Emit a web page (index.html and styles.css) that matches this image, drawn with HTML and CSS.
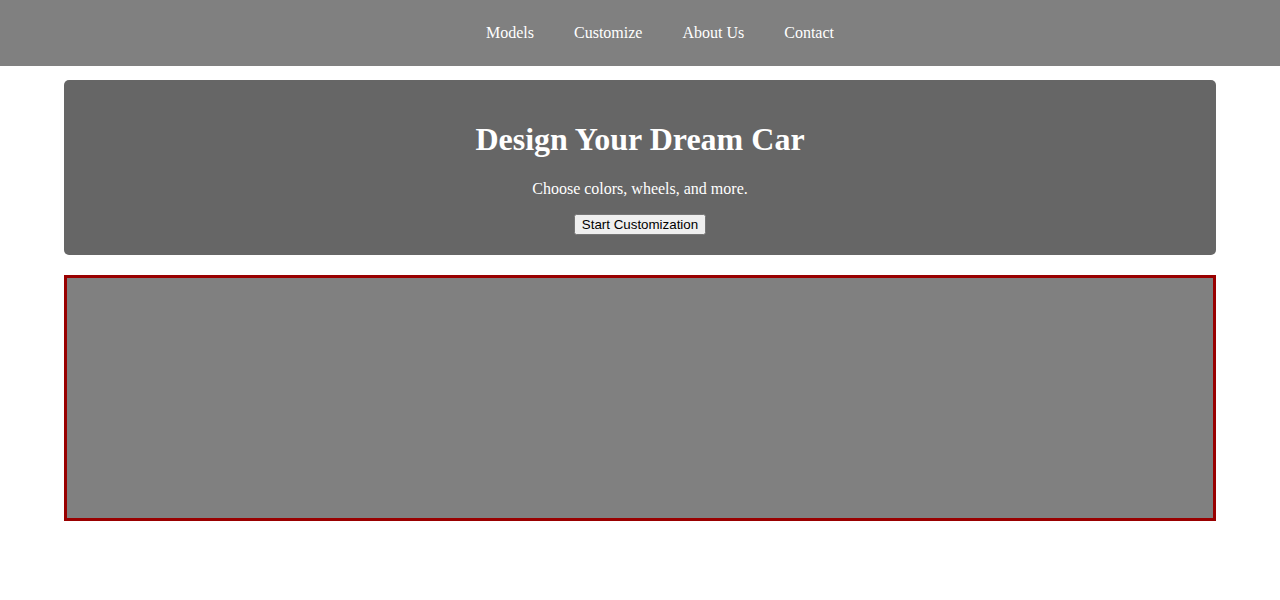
FILE: index.html
```html
<!DOCTYPE html>
<html lang="en">
<head>
<meta charset="utf-8">
<title>Design Your Dream Car</title>
<link rel="stylesheet" href="styles.css">
</head>
<body>
<header class="site-header">
  <nav class="main-nav">
    <ul class="nav-list">
      <li class="nav-item"><a class="nav-link" href="#">Models</a></li>
      <li class="nav-item"><a class="nav-link" href="#">Customize</a></li>
      <li class="nav-item"><a class="nav-link" href="#">About Us</a></li>
      <li class="nav-item"><a class="nav-link" href="#">Contact</a></li>
    </ul>
  </nav>
</header>
<main class="content">
  <section class="hero">
    <h1 class="hero-title">Design Your Dream Car</h1>
    <p class="hero-text">Choose colors, wheels, and more.</p>
    <button class="hero-button" type="button">Start Customization</button>
  </section>
  <section class="preview"></section>
</main>
</body>
</html>
```
FILE: styles.css
```css
body {
  margin: 0;
  font-family: "Liberation Serif", "Times New Roman", serif;
  background: #ffffff;
}

.site-header {
  background: #808080;
}

.main-nav {
  padding: 24px 0;
}

.nav-list {
  display: flex;
  justify-content: center;
  list-style: none;
  margin: 0;
  padding: 0 0 0 40px;
}

.nav-item {
  padding: 0 20px;
  line-height: 18px;
}

.nav-link {
  color: #ffffff;
  text-decoration: none;
  font-size: 16px;
}

.content {
  width: 90%;
  margin: 0 auto;
}

.hero {
  margin-top: 14px;
  background: #666666;
  border-radius: 5px;
  padding: 20px;
  text-align: center;
  color: #ffffff;
  display: flow-root;
}

.hero-title {
  font-size: 32px;
  margin: 21.44px 0;
}

.hero-text {
  font-size: 16px;
  margin: 16px 0;
}

.hero-button {
  font-family: "Liberation Sans", Arial, sans-serif;
  font-size: 13.333px;
}

.preview {
  margin-top: 20px;
  height: 240px;
  background: #808080;
  border: 3px solid #990000;
}
```
